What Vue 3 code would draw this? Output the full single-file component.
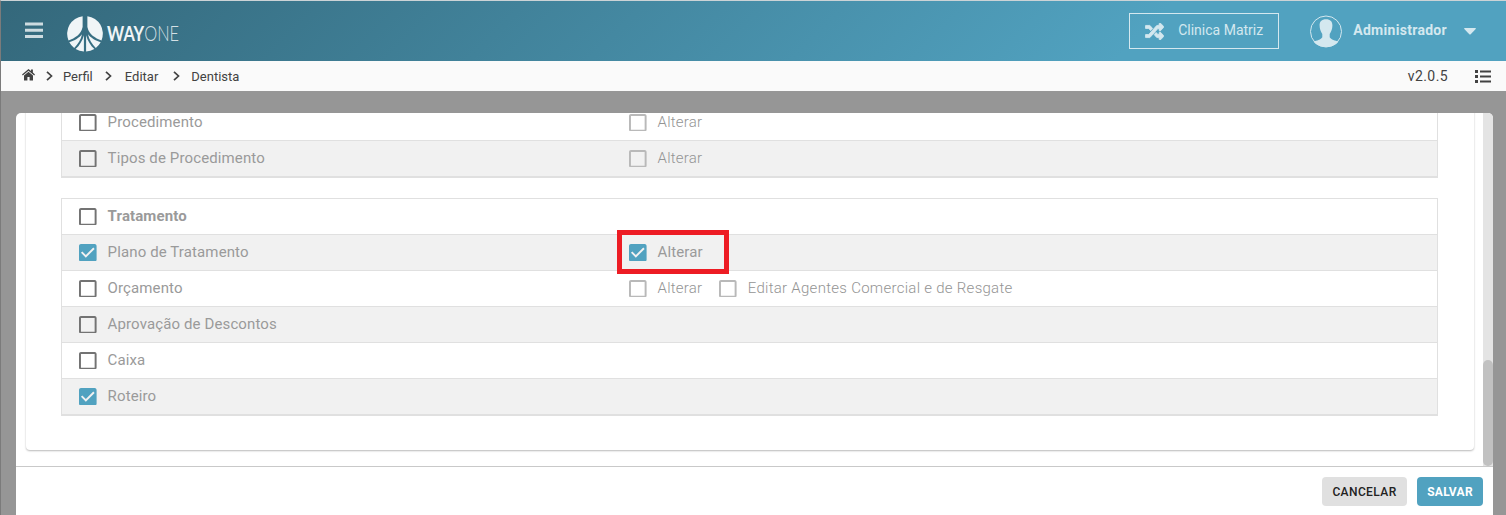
<script setup>
const crumbs = ['Perfil', 'Editar', 'Dentista']
const groups = [
  {
    rows: [
      { label: 'Procedimento', actions: [{ label: 'Alterar', disabled: true }] },
      { label: 'Tipos de Procedimento', actions: [{ label: 'Alterar', disabled: true }] },
    ],
  },
  {
    rows: [
      { label: 'Tratamento', title: true, actions: [] },
      { label: 'Plano de Tratamento', checked: true, actions: [{ label: 'Alterar', checked: true, marked: true }] },
      {
        label: 'Orçamento',
        actions: [
          { label: 'Alterar', disabled: true },
          { label: 'Editar Agentes Comercial e de Resgate', disabled: true, wide: true },
        ],
      },
      { label: 'Aprovação de Descontos', actions: [] },
      { label: 'Caixa', actions: [] },
      { label: 'Roteiro', checked: true, actions: [] },
    ],
  },
]
const boxPath = 'M16 2v14H2V2h14m0-2H2C.9 0 0 .9 0 2v14c0 1.100.9 2 2 2h14c1.100 0 2-.9 2-2V2c0-1.100-.9-2-2-2z'
const checkPath = 'M16 0H2C.9 0 0 .9 0 2v14c0 1.100.9 2 2 2h14c1.100 0 2-.9 2-2V2c0-1.100-.9-2-2-2zM7 14L2 9l1.400-1.400L7 11.200l7.600-7.600L16 5z'
</script>

<template>
  <div class="page">
    <header class="topbar">
      <svg class="burger" width="18" height="17" viewBox="0 0 18 17">
        <path d="M0 .5h18v3H0zM0 6.700h18v3H0zM0 12.900h18v3H0z" fill="currentColor" />
      </svg>
      <div class="brand">
        <svg width="36" height="36" viewBox="0 0 36 36">
          <path d="M15.600.2A17.700 17.700 0 0 0 1.500 24.500C8 22 14 18.500 15.600 11z" />
          <path d="M20.400.2A17.700 17.700 0 0 1 34.500 24.500C28 22 22 18.500 20.400 11z" />
          <path d="M2.300 26.200C7.500 24.600 12.500 21.600 15 18.200C14 23.500 10.800 28.500 7.200 31.900A17.500 17.500 0 0 1 2.300 26.200z" />
          <path d="M33.700 26.200C28.500 24.600 23.500 21.600 21 18.200C22 23.500 25.200 28.500 28.800 31.900A17.500 17.500 0 0 0 33.700 26.200z" />
          <path d="M8.600 33C12.500 29.500 15.500 24.500 16.900 19.200V35.600A17.500 17.500 0 0 1 8.600 33z" />
          <path d="M27.400 33C23.500 29.500 20.500 24.500 19.100 19.200V35.600A17.500 17.500 0 0 0 27.400 33z" />
        </svg>
        <svg class="wordmark" width="74" height="20" viewBox="0 0 74 20">
          <text x="0" y="17" textLength="72" lengthAdjust="spacingAndGlyphs"><tspan class="way">WAY</tspan><tspan class="one">ONE</tspan></text>
        </svg>
      </div>
      <div class="clinic">
        <svg width="19" height="17" viewBox="-8 32 528 448" preserveAspectRatio="none">
          <path fill="currentColor" stroke="currentColor" stroke-width="22" d="M504.971 359.029c9.373 9.373 9.373 24.569 0 33.941l-80 79.984c-15.010 15.010-40.971 4.490-40.971-16.971V416h-58.785a12.004 12.004 0 0 1-8.773-3.812l-70.556-75.596 53.333-57.143L352 336h32v-39.981c0-21.438 25.943-31.998 40.971-16.971l80 79.981zM12 176h84l52.781 56.551 53.333-57.143-70.556-75.596A11.999 11.999 0 0 0 122.785 96H12c-6.627 0-12 5.373-12 12v56c0 6.627 5.373 12 12 12zm372 0v39.984c0 21.460 25.961 31.980 40.971 16.971l80-79.984c9.373-9.373 9.373-24.569 0-33.941l-80-79.981C409.943 24.021 384 34.582 384 56.019V96h-58.785a12.004 12.004 0 0 0-8.773 3.812L96 336H12c-6.627 0-12 5.373-12 12v56c0 6.627 5.373 12 12 12h110.785c3.326 0 6.503-1.381 8.773-3.812L352 176h32z" />
        </svg>
        <span>Clinica Matriz</span>
      </div>
      <svg class="avatar" width="32" height="33" viewBox="0 0 32 33">
        <circle cx="16" cy="16.500" r="15.500" fill="none" stroke="currentColor" />
        <path fill="currentColor" d="M16 4.300c-4.300 0-6.600 2.400-6.400 6.300.1 3.400 1 6 2.700 8.300v3.400c-1.200 2.500-5.800 3.200-8.700 4.400C6.700 30.500 11 32 16 32s9.300-1.500 12.400-5.300c-2.900-1.200-7.500-1.900-8.700-4.400v-3.400c1.700-2.300 2.600-4.900 2.700-8.300.2-3.900-2.100-6.300-6.400-6.300z" />
      </svg>
      <span class="user">Administrador</span>
      <svg class="caret" width="12" height="7" viewBox="0 0 12 7"><path fill="currentColor" d="M.8 0h10.400c.6 0 .8.500.5.900L6.700 6.200c-.4.400-1 .4-1.400 0L.3.900C0 .5.200 0 .8 0z" /></svg>
    </header>

    <nav class="crumbs">
      <svg class="home" width="13" height="12" viewBox="0 0 13 12">
        <path fill="currentColor" d="M6.500 2.800L2 6.600V11.500h3.400V8h2.200v3.500H11V6.600z" />
        <path fill="currentColor" d="M6.500 0L9 2V.6h1.900v3L13 5.500l-.8.900-5.700-4.700L.8 6.400 0 5.500z" />
      </svg>
      <template v-for="(c, i) in crumbs" :key="c">
        <svg :class="['chev', 'chev' + i]" width="7" height="10" viewBox="0 0 7 10"><path d="M1 .8L5.500 5 1 9.200" fill="none" stroke="currentColor" stroke-width="1.700" /></svg>
        <span>{{ c }}</span>
      </template>
      <span class="version">v2.0.5</span>
      <svg class="list" width="16" height="13" viewBox="0 0 16 13">
        <path fill="currentColor" d="M0 0h3v3H0zM0 5h3v3H0zM0 10h3v3H0zM5 .5h11v2H5zM5 5.500h11v2H5zM5 10.500h11v2H5z" />
      </svg>
    </nav>

    <main class="modal">
      <div class="scroller">
        <div class="card">
          <section v-for="(g, gi) in groups" :key="gi" class="group">
            <div v-for="r in g.rows" :key="r.label" class="row">
              <div class="name" :class="{ title: r.title }">
                <svg class="box" :class="{ on: r.checked }" width="17.600" height="17.600" viewBox="0 0 18 18"><path :d="r.checked ? checkPath : boxPath" /></svg>
                <span>{{ r.label }}</span>
              </div>
              <div class="actions">
                <div v-for="a in r.actions" :key="a.label" class="action" :class="{ disabled: a.disabled, wide: a.wide }">
                  <svg class="box" :class="{ on: a.checked }" width="17.600" height="17.600" viewBox="0 0 18 18"><path :d="a.checked ? checkPath : boxPath" /></svg>
                  <span>{{ a.label }}</span>
                  <i v-if="a.marked" class="marker"></i>
                </div>
              </div>
            </div>
          </section>
        </div>
        <div class="track"><div class="thumb"></div></div>
      </div>
      <footer class="footer">
        <button class="btn">CANCELAR</button>
        <button class="btn primary">SALVAR</button>
      </footer>
    </main>
  </div>
</template>

<style>
body { margin: 0; overflow: hidden; }
</style>

<style scoped>
* { box-sizing: border-box; }
.page {
  height: 515px;
  display: flex;
  flex-direction: column;
  background: #969696;
  border-top: 1px solid #ccd3d6;
  border-left: 1px solid #7b7b7b;
  font-family: Roboto, "Liberation Sans", sans-serif;
  overflow: hidden;
}
svg { display: block; flex: none; }
.topbar {
  height: 60px;
  flex: none;
  display: flex;
  align-items: center;
  padding: 0 30px 0 24px;
  color: #d4e8ef;
  background: linear-gradient(135deg, #34687b 0%, #51a2c0 75%, #51a2c0 100%);
}
.burger { color: #cddbe0; margin-bottom: 2px; }
.brand { display: flex; align-items: center; margin: 5px 0 0 24px; }
.brand svg { fill: #f0f5f7; }
.wordmark { margin-left: 4px; font-family: Lato, sans-serif; font-size: 21px; overflow: visible; }
.way { font-weight: 700; }
.one { font-weight: 300; fill-opacity: .85; }
.clinic {
  width: 150px;
  height: 36px;
  margin-left: auto;
  padding-left: 15px;
  display: flex;
  align-items: center;
  border: 1px solid #d4e8ef;
  font-size: 14px;
}
.clinic span { margin: 0 0 2px 14px; white-space: nowrap; }
.avatar { margin-left: 31px; }
.user { margin: 0 0 2px 11px; font-size: 14px; font-weight: 700; letter-spacing: .3px; }
.caret { margin-left: 17px; }
.crumbs {
  height: 30px;
  flex: none;
  display: flex;
  align-items: center;
  padding: 0 15px 0 21px;
  background: #fafafa;
  color: #424242;
  font-size: 13px;
}
.home { margin-top: -3px; }
.chev0 { margin: 0 10px 0 11px; }
.chev1 { margin: 0 13px 0 12px; }
.chev2 { margin: 0 11px 0 15px; }
.version { margin-left: auto; font-size: 14px; letter-spacing: .4px; }
.list { margin-left: 27px; }
.modal {
  width: 1477px;
  margin: 22px 0 0 15px;
  flex: 1;
  display: flex;
  flex-direction: column;
  background: #fff;
  border-radius: 5px 5px 0 0;
  overflow: hidden;
}
.scroller {
  height: 353px;
  flex: none;
  display: flex;
  justify-content: space-between;
  align-items: flex-end;
  padding-left: 10px;
  overflow: hidden;
}
.card {
  width: 1448px;
  margin-bottom: 16px;
  padding: 0 36px 34px 35px;
  border-radius: 4px;
  box-shadow: 0 1px 2px rgba(0, 0, 0, .28);
}
.group { border: 1px solid #e0e0e0; border-bottom-width: 2px; }
.group + .group { margin-top: 20px; }
.row { height: 36px; display: flex; border-bottom: 1px solid #e0e0e0; color: #9a9a9a; font-size: 15px; letter-spacing: .12px; }
.row:last-child { height: 35px; border-bottom: 0; }
.row:nth-child(even) { background: #f1f1f1; }
.name { width: 550px; padding-left: 17px; display: flex; align-items: center; }
.name span, .action span { margin: 0 0 2px 11px; white-space: nowrap; }
.title { font-weight: 700; }
.box { fill: #737373; margin-top: .4px; }
.box.on { fill: #51a2c0; }
.actions { display: flex; align-items: center; padding-left: 17px; }
.action { display: flex; align-items: center; position: relative; }
.disabled { font-weight: 300; letter-spacing: .22px; color: #949494; }
.disabled .box { fill: #b9b9b9; }
.wide { margin-left: 16.800px; letter-spacing: .28px; }
.marker { position: absolute; left: -12px; top: -13px; width: 112px; height: 44px; border: 5px solid #ed1c24; }
.track { width: 10px; height: 353px; padding-top: 247px; background: #e4e4e4; }
.thumb { height: 106px; border-radius: 5px; background: #c1c1c1; }
.footer {
  flex: 1;
  display: flex;
  justify-content: flex-end;
  align-items: flex-start;
  gap: 10px;
  padding: 10px 10px 0 0;
  border-top: 1px solid #c9c9c9;
}
.btn {
  width: 85px;
  height: 29px;
  padding: 0;
  border: 0;
  border-radius: 4px;
  background: #e0e0e0;
  color: #222;
  font: 500 12px Roboto, sans-serif;
  letter-spacing: .4px;
}
.primary { width: 66px; background: #51a2c0; color: #fff; font-weight: 700; letter-spacing: .3px; }
</style>
